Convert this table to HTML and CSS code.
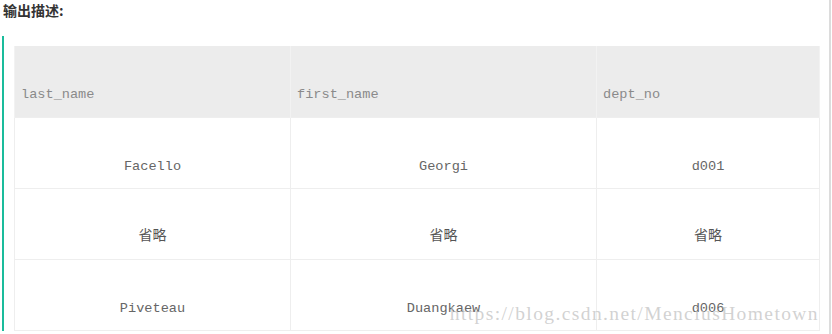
FILE: index.html
```html
<!DOCTYPE html>
<html lang="zh">
<head>
<meta charset="utf-8">
<title>输出描述</title>
<link rel="stylesheet" href="styles.css">
</head>
<body>
<div class="page">
  <h3 class="title">输出描述:</h3>
  <div class="quote">
    <table class="data">
      <colgroup>
        <col class="c1"><col class="c2"><col class="c3">
      </colgroup>
      <thead>
        <tr><th>last_name</th><th>first_name</th><th>dept_no</th></tr>
      </thead>
      <tbody>
        <tr><td>Facello</td><td>Georgi</td><td>d001</td></tr>
        <tr><td class="cjk">省略</td><td class="cjk">省略</td><td class="cjk">省略</td></tr>
        <tr><td>Piveteau</td><td>Duangkaew</td><td>d006</td></tr>
      </tbody>
    </table>
    <div class="watermark">https://blog.csdn.net/MenciusHometown</div>
  </div>
</div>
</body>
</html>
```

FILE: styles.css
```css
html, body {
  margin: 0;
  padding: 0;
  background: #fff;
}
body {
  width: 832px;
  height: 334px;
  overflow: hidden;
}
.page {
  width: 829px;
  height: 334px;
  border-right: 2px solid #dcdcdc;
}
.title {
  margin: 0;
  padding-left: 3px;
  height: 20px;
  font: bold 14px/20px "Noto Sans CJK SC", "Noto Sans", sans-serif;
  color: #333;
}
.quote {
  position: relative;
  margin: 16px 0 0 2px;
  border-left: 2px solid #1abc9c;
  padding: 10px 0 0 10px;
}
.data {
  border-collapse: collapse;
  table-layout: fixed;
  width: 805px;
  font-family: "Liberation Mono", "Courier New", monospace;
  font-size: 13.6px;
}
.c1 { width: 276px; }
.c2 { width: 306px; }
.c3 { width: 223px; }
.data th {
  background: #ececec;
  color: #8a8a8a;
  font-weight: normal;
  text-align: left;
  padding: 39px 6px 12px;
  line-height: 20px;
  border-left: 1px solid #f2f2f2;
  border-right: 1px solid #f2f2f2;
}
.data td {
  color: #666;
  text-align: center;
  padding: 39px 6px 11px;
  line-height: 20px;
  border: 1px solid #eeeeee;
  background: #fff;
}
.data td.cjk {
  font-family: "Noto Sans CJK SC", sans-serif;
  font-size: 14px;
  color: #555;
  padding-top: 35px;
  padding-bottom: 15px;
}
.watermark {
  position: absolute;
  right: 10px;
  bottom: 6px;
  font-family: "Liberation Serif", serif;
  font-size: 19.5px;
  letter-spacing: 1.4px;
  color: rgba(190, 190, 190, 0.7);
  white-space: nowrap;
}
```
